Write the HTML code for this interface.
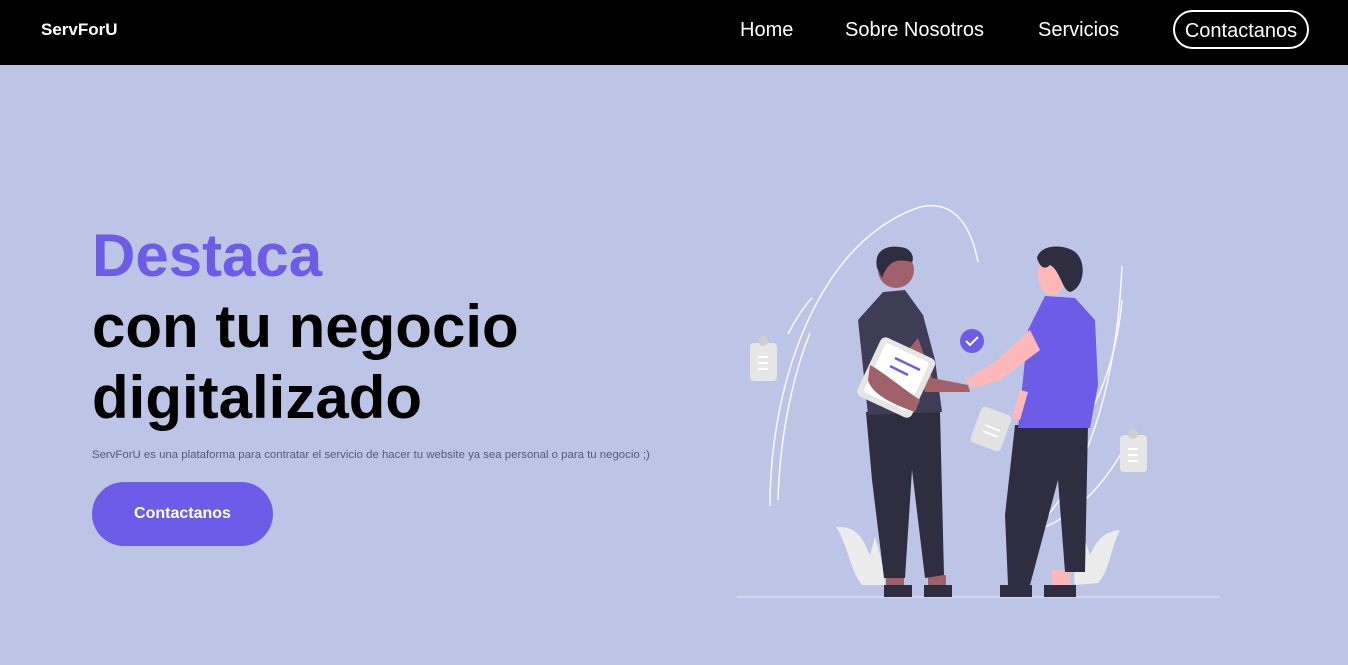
<!DOCTYPE html>
<html><head><meta charset="utf-8">
<style>
*{margin:0;padding:0;box-sizing:border-box}
body{width:1348px;height:665px;overflow:hidden;background:#bdc5e7;font-family:"Liberation Sans",sans-serif;position:relative}
nav{position:absolute;left:0;top:0;width:1348px;height:65px;background:#000;color:#fff}
.logo{position:absolute;left:41px;top:20px;font-weight:700;font-size:17px}
.nl{position:absolute;top:19px;font-size:20px}
.cbtn{position:absolute;left:1173px;top:10px;width:136px;height:39px;border:2px solid #fff;border-radius:20px;font-size:20px;text-align:center;line-height:38px}
h1{position:absolute;left:92px;top:220px;font-size:60px;line-height:71px;font-weight:700;color:#000}
h1 span{color:#6c5ce7}
p.d{position:absolute;left:92px;top:449px;font-size:11.4px;color:#555a70}
.btn{position:absolute;left:92px;top:482px;width:181px;height:64px;border-radius:32px;background:#6c5ce7;color:#fff;font-weight:700;font-size:16px;text-align:center;line-height:64px}
svg{position:absolute;left:0;top:0}
</style></head><body>
<nav>
<div class="logo">ServForU</div>
<div class="nl" style="left:740px">Home</div>
<div class="nl" style="left:845px">Sobre Nosotros</div>
<div class="nl" style="left:1038px">Servicios</div>
<div class="cbtn">Contactanos</div>
</nav>
<h1><span>Destaca</span><br>con tu negocio<br>digitalizado</h1>
<p class="d">ServForU es una plataforma para contratar el servicio de hacer tu website ya sea personal o para tu negocio ;)</p>
<div class="btn">Contactanos</div>
<svg width="1348" height="665" viewBox="0 0 1348 665">
<g fill="none" stroke="#fff" stroke-width="1.5" opacity="0.9">
<path d="M770 506 C770 380 820 240 920 207 C950 200 970 220 978 262"/>
<path d="M788 334 C795 320 805 305 812 298"/>
<path d="M778 500 C780 430 795 370 810 333"/>
<path d="M1032 530 C1070 500 1115 420 1122 266"/>
<path d="M1045 480 C1085 430 1115 380 1122 300"/>
<path d="M1032 532 C1070 520 1100 490 1122 452"/>
</g>
<line x1="737" y1="597" x2="1220" y2="597" stroke="#d8dcec" stroke-width="1.5"/>
<path d="M836 527 C860 525 865 545 870 555 L875 537 C882 560 885 575 885 585 L862 585 C850 570 848 545 836 527Z" fill="#ececec"/>
<path d="M1120 530 C1100 532 1095 545 1090 555 L1085 540 C1075 560 1073 575 1075 585 L1098 583 C1110 570 1110 550 1120 530Z" fill="#ececec"/>
<rect x="750" y="343" width="27" height="38" rx="4" fill="#e6e6e6"/><circle cx="763" cy="341" r="5" fill="#d0d0d0"/>
<g stroke="#fff" stroke-width="2"><line x1="758" y1="357" x2="768" y2="357"/><line x1="758" y1="363" x2="768" y2="363"/><line x1="758" y1="369" x2="768" y2="369"/></g>
<rect x="1120" y="435" width="27" height="37" rx="4" fill="#e6e6e6"/><circle cx="1133" cy="434" r="5" fill="#d0d0d0"/>
<g stroke="#fff" stroke-width="2"><line x1="1128" y1="449" x2="1138" y2="449"/><line x1="1128" y1="455" x2="1138" y2="455"/><line x1="1128" y1="461" x2="1138" y2="461"/></g>
<rect x="975" y="410" width="32" height="38" rx="4" fill="#e2e2e2" transform="rotate(20 991 429)"/>
<g stroke="#fff" stroke-width="2"><line x1="985" y1="425" x2="1000" y2="431"/><line x1="983" y1="431" x2="998" y2="437"/></g>
<circle cx="972" cy="341" r="12" fill="#6c5ce7"/><path d="M966 341 l4 4 l8 -8" stroke="#fff" stroke-width="2" fill="none"/>
<rect x="886" y="575" width="18" height="14" fill="#a0616a"/><rect x="928" y="575" width="18" height="14" fill="#a0616a"/>
<path d="M884 585 h28 v12 h-28z M924 585 h28 v12 h-28z" fill="#2f2e41"/>
<path d="M866 412 L940 412 L944 575 L925 578 L912 470 L905 578 L884 578 L872 480Z" fill="#2f2e41"/>
<path d="M883 292 L905 290 L923 315 L935 360 L942 412 L868 415 L858 320 Z" fill="#3f3d56"/>
<path d="M918 338 L932 378 L968 385 L970 392 L925 392 L908 350Z" fill="#a0616a"/>
<circle cx="896" cy="270" r="18" fill="#a0616a"/>
<path d="M877 268 C873 248 890 244 905 248 C915 252 913 262 912 262 C895 258 888 262 882 278Z" fill="#2f2e41"/>
<rect x="866" y="345" width="60" height="65" rx="6" fill="#e6e6e6" transform="rotate(25 896 378)"/>
<rect x="872" y="350" width="48" height="54" rx="3" fill="#fff" transform="rotate(25 896 378)"/>
<g stroke="#6c5ce7" stroke-width="2.5"><line x1="895" y1="358" x2="920" y2="370"/><line x1="890" y1="366" x2="908" y2="375"/></g>
<path d="M870 365 C880 370 905 390 920 400 L915 412 C895 405 872 395 868 380Z" fill="#a0616a"/>
<rect x="1010" y="570" width="18" height="16" fill="#ffb8b8"/><rect x="1052" y="570" width="18" height="16" fill="#ffb8b8"/>
<path d="M1000 585 h32 v12 h-32z M1044 585 h32 v12 h-32z" fill="#2f2e41"/>
<path d="M1015 425 L1088 425 L1085 572 L1065 572 L1058 480 L1030 585 L1008 585 L1005 515Z" fill="#2f2e41"/>
<path d="M1045 296 L1075 298 L1095 320 L1098 385 L1090 428 L1018 428 L1028 330 Z" fill="#6c5ce7"/>
<path d="M1030 330 L1040 350 L1000 380 L972 388 L965 380 L995 362 Z" fill="#ffb8b8"/>
<path d="M1020 390 L1028 392 L1020 420 L1012 418Z" fill="#ffb8b8"/>
<ellipse cx="1052" cy="275" rx="14" ry="20" fill="#ffb8b8"/>
<path d="M1037 258 C1040 245 1060 244 1072 250 C1088 258 1085 288 1070 292 C1062 290 1060 270 1050 265 C1045 270 1040 268 1037 258Z" fill="#2f2e41"/>
</svg>
</body></html>
